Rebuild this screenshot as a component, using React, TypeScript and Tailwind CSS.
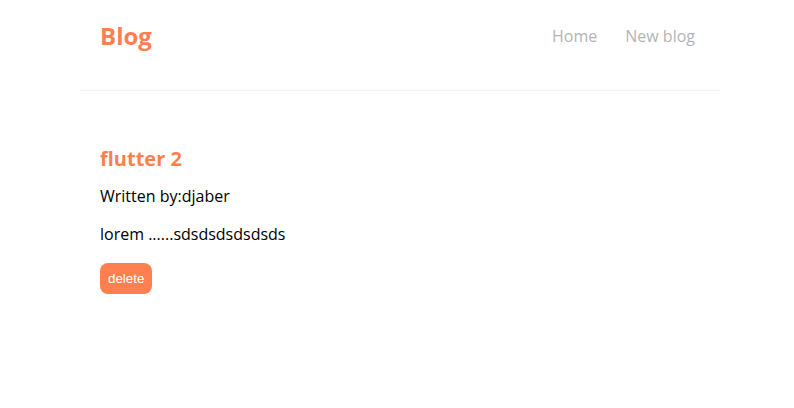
export default function App() {
  return (
    <div className="min-h-[408px] bg-white" style={{ fontFamily: "'Open Sans', 'Noto Sans', sans-serif" }}>
      <nav className="ml-[80px] h-[91px] w-[640px] border-b border-[#f2f2f2] px-5">
        <div className="flex h-[72px] items-center justify-between">
          <h1 className="text-[24px] font-bold text-[#ff7f50]">Blog</h1>
          <div className="mr-[5px] flex gap-[28px] text-[16px] text-[#b4b4b4]">
            <a href="#">Home</a>
            <a href="#">New blog</a>
          </div>
        </div>
      </nav>

      <main className="ml-[80px] w-[640px] px-5 pt-[54px]">
        <h2 className="text-[20px] font-bold leading-[28px] text-[#ff7f50]">flutter 2</h2>
        <p className="mt-[13px] text-[16px] leading-[20px] text-black">Written by:djaber</p>
        <p className="mt-[18px] text-[16px] leading-[20px] text-black">lorem ......sdsdsdsdsdsds</p>
        <button
          className="mt-[19px] h-[31px] rounded-[8px] bg-[#ff7f50] px-[8px] text-[13.33px] text-white"
          style={{ fontFamily: "'Liberation Sans', Arial, sans-serif" }}
        >
          delete
        </button>
      </main>
    </div>
  );
}
